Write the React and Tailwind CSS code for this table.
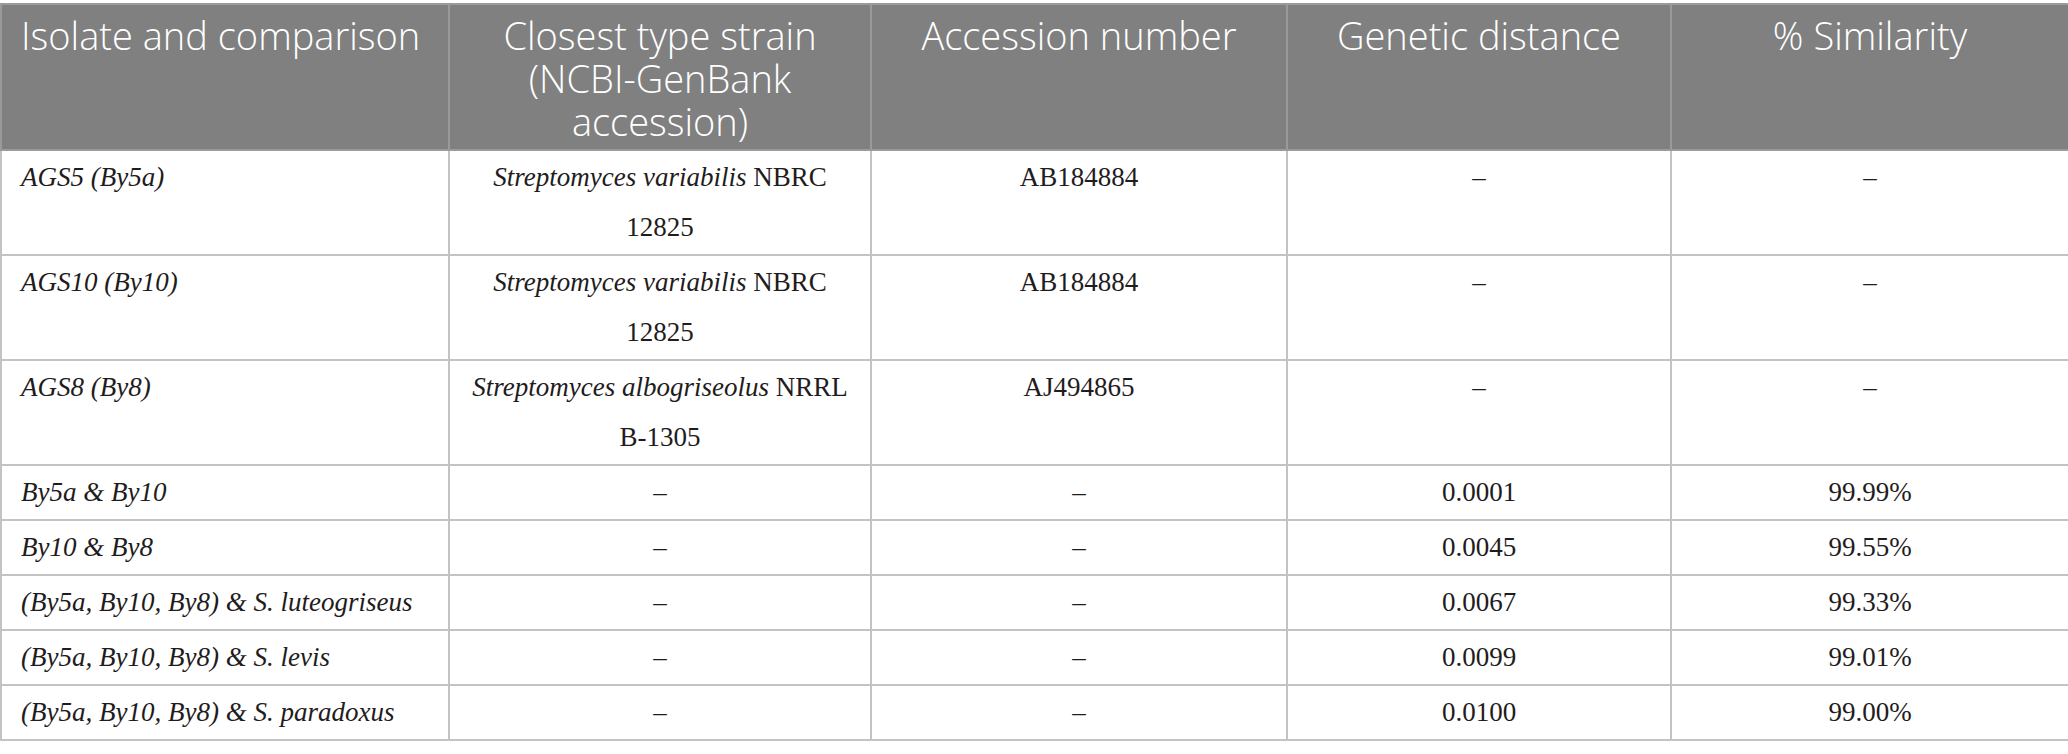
const headers = [
  { label: ["Isolate and comparison"], align: "text-left" },
  { label: ["Closest type strain", "(NCBI-GenBank", "accession)"], align: "text-center" },
  { label: ["Accession number"], align: "text-center" },
  { label: ["Genetic distance"], align: "text-center" },
  { label: ["% Similarity"], align: "text-center" },
];

const rows = [
  {
    isolate: "AGS5 (By5a)",
    strain: { species: "Streptomyces variabilis", code: "NBRC", rest: "12825" },
    accession: "AB184884",
    distance: "–",
    similarity: "–",
  },
  {
    isolate: "AGS10 (By10)",
    strain: { species: "Streptomyces variabilis", code: "NBRC", rest: "12825" },
    accession: "AB184884",
    distance: "–",
    similarity: "–",
  },
  {
    isolate: "AGS8 (By8)",
    strain: { species: "Streptomyces albogriseolus", code: "NRRL", rest: "B-1305" },
    accession: "AJ494865",
    distance: "–",
    similarity: "–",
  },
  { isolate: "By5a & By10", strain: null, accession: "–", distance: "0.0001", similarity: "99.99%" },
  { isolate: "By10 & By8", strain: null, accession: "–", distance: "0.0045", similarity: "99.55%" },
  { isolate: "(By5a, By10, By8) & S. luteogriseus", strain: null, accession: "–", distance: "0.0067", similarity: "99.33%" },
  { isolate: "(By5a, By10, By8) & S. levis", strain: null, accession: "–", distance: "0.0099", similarity: "99.01%" },
  { isolate: "(By5a, By10, By8) & S. paradoxus", strain: null, accession: "–", distance: "0.0100", similarity: "99.00%" },
];

const cell = "border-2 border-[#c3c3c3] align-top px-[19px] pt-[1px] pb-[2px]";

export default function App() {
  return (
    <div className="w-[2068px] bg-white pt-[3px]">
      <table className="w-[2068px] table-fixed border-collapse font-['Liberation_Serif',serif] text-[27px] leading-[50px] text-[#1f1c1d]">
        <colgroup>
          <col className="w-[448px]" />
          <col className="w-[422px]" />
          <col className="w-[416px]" />
          <col className="w-[384px]" />
          <col className="w-[398px]" />
        </colgroup>
        <thead>
          <tr className="bg-[#7f807f] text-white font-['Open_Sans',sans-serif] text-[38px] leading-[43px]">
            {headers.map((h, i) => (
              <th
                key={i}
                className={`border-2 border-[#9a9a9a] align-top px-[19px] pt-[9px] pb-[6px] font-light ${h.align}`}
              >
                {h.label.map((line, j) => (
                  <div key={j} className="whitespace-nowrap">{line}</div>
                ))}
              </th>
            ))}
          </tr>
        </thead>
        <tbody>
          {rows.map((r, i) => (
            <tr key={i}>
              <td className={`${cell} text-left italic`}>{r.isolate}</td>
              <td className={`${cell} text-center`}>
                {r.strain ? (
                  <>
                    <i>{r.strain.species}</i> {r.strain.code}
                    <br />
                    {r.strain.rest}
                  </>
                ) : (
                  "–"
                )}
              </td>
              <td className={`${cell} text-center`}>{r.accession}</td>
              <td className={`${cell} text-center`}>{r.distance}</td>
              <td className={`${cell} text-center`}>{r.similarity}</td>
            </tr>
          ))}
        </tbody>
      </table>
    </div>
  );
}
